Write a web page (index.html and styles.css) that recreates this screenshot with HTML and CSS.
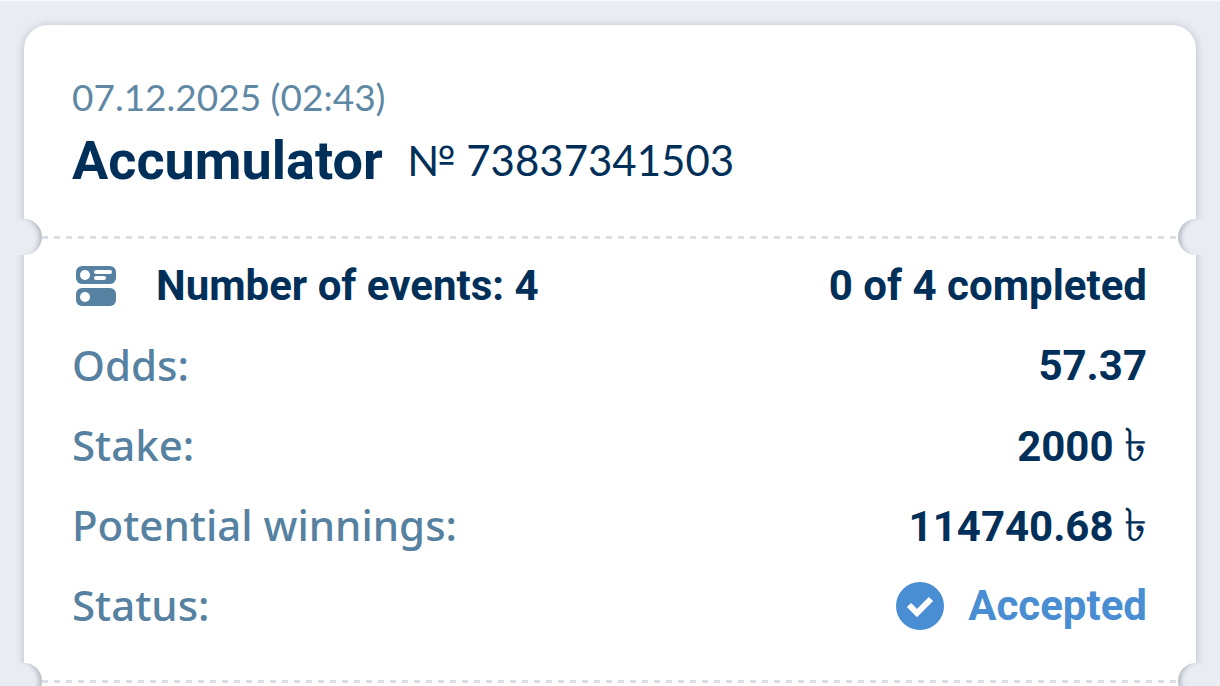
FILE: index.html
```html
<!DOCTYPE html>
<html lang="en">
<head>
    <meta charset="UTF-8">
    <meta name="viewport" content="width=device-width, initial-scale=1.0">
    <title>Bet slip</title>
    <link rel="stylesheet" href="styles.css">
</head>
<body>
    <main class="ticket">
        <header class="ticket-header">
            <time class="date" datetime="2025-12-07T02:43">07.12.2025 (02:43)</time>
            <div class="title">
                <h1>Accumulator</h1>
                <span class="number">№ 73837341503</span>
            </div>
        </header>

        <section class="ticket-body">
            <div class="row events">
                <svg class="events-icon" width="40" height="40" viewBox="0 0 40 40" aria-hidden="true">
                    <rect width="40" height="18" rx="6" fill="#5681a1"/>
                    <rect y="22" width="40" height="18" rx="6" fill="#5681a1"/>
                    <circle cx="9" cy="9" r="5" fill="#fff"/>
                    <circle cx="9" cy="31" r="5" fill="#fff"/>
                    <path d="M20 6h14M20 12h8" stroke="#fff" stroke-width="4" stroke-linecap="round"/>
                </svg>
                <span class="value">Number of events: 4</span>
                <span class="value completed">0 of 4 completed</span>
            </div>
            <dl>
                <div class="row">
                    <dt>Odds:</dt>
                    <dd class="value">57.37</dd>
                </div>
                <div class="row">
                    <dt>Stake:</dt>
                    <dd class="value">2000 <span class="currency">৳</span></dd>
                </div>
                <div class="row">
                    <dt>Potential winnings:</dt>
                    <dd class="value">114740.68 <span class="currency">৳</span></dd>
                </div>
                <div class="row">
                    <dt>Status:</dt>
                    <dd class="value status">
                        <svg width="48" height="48" viewBox="0 0 48 48" aria-hidden="true">
                            <circle cx="24" cy="24" r="24" fill="#498dd2"/>
                            <path d="M13 23l8 8 14-14" fill="none" stroke="#fff" stroke-width="6"/>
                        </svg>
                        Accepted
                    </dd>
                </div>
            </dl>
        </section>

        <section class="ticket-footer"></section>
    </main>
</body>
</html>
```

FILE: styles.css
```css
* {
    box-sizing: border-box;
}

body {
    margin: 0;
    height: 100vh;
    overflow: hidden;
    border-top: 1px solid #f8f9fb;
    background-color: #e9edf3;
    color: #003059;
    font-family: Roboto, sans-serif;
}

.ticket {
    margin: 24px;
    border-radius: 24px;
    background-color: #fff;
    box-shadow: 0 1px 8px rgba(40, 45, 60, 0.25);
}

.ticket-header {
    padding: 45px 49px 39px 48px;
}

.date {
    display: block;
    height: 54px;
    line-height: 54px;
    color: #5f88a5;
    font-family: Lato, sans-serif;
    font-size: 37px;
}

.title {
    display: flex;
    align-items: center;
    gap: 24px;
    line-height: 73px;
}

h1 {
    margin: 0;
    font-size: 54px;
    font-weight: 700;
}

.number {
    font-family: Lato, sans-serif;
    font-size: 42px;
}

.ticket-body,
.ticket-footer {
    position: relative;
    padding: 10px 49px 34px 48px;
    /* perforation line */
    background: repeating-linear-gradient(to right, #dcdde5 0 6px, transparent 6px 12px) 18px 0 / calc(100% - 36px) 3px no-repeat;
}

.ticket-footer {
    min-height: 200px;
}

/* round cuts on both edges */
.ticket-body::before,
.ticket-body::after,
.ticket-footer::before,
.ticket-footer::after {
    content: "";
    position: absolute;
    top: -17px;
    width: 26px;
    height: 36px;
    background-color: #e9edf3;
}

.ticket-body::before,
.ticket-footer::before {
    left: -8px;
    border-radius: 0 18px 18px 0;
    box-shadow: inset -7px 1px 4px -4px rgba(40, 45, 60, 0.25);
}

.ticket-body::after,
.ticket-footer::after {
    right: -8px;
    border-radius: 18px 0 0 18px;
    box-shadow: inset 7px 1px 4px -4px rgba(40, 45, 60, 0.25);
}

dl {
    margin: 0;
}

.row {
    display: flex;
    align-items: center;
    justify-content: space-between;
    height: 80px;
}

.events-icon {
    margin: 0 40px 0 4px;
}

.completed {
    margin-left: auto;
}

dt {
    padding-bottom: 2px;
    color: #5681a1;
    font-family: "Noto Sans", sans-serif;
    font-size: 42px;
    font-weight: 500;
    line-height: 48px;
}

.value {
    margin-right: 0;
    font-size: 42px;
    font-weight: 700;
    line-height: 48px;
}

.currency {
    font-size: 46px;
    font-weight: 400;
    line-height: 1;
}

.status {
    display: flex;
    align-items: center;
    gap: 24px;
    color: #498dd2;
}
```
